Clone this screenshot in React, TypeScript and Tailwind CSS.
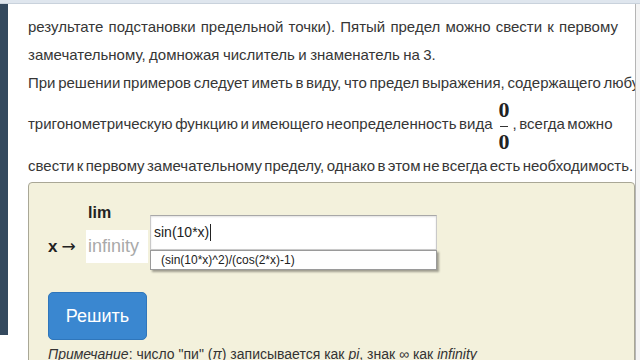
import React from "react";

const sans = { fontFamily: '"Liberation Sans", Arial, sans-serif' };

export default function App() {
  return (
    <div
      className="w-[640px] h-[360px] overflow-hidden bg-white flex flex-col text-[#363636]"
      style={sans}
    >
      <div className="h-[4px] bg-[#dfe6ee] border-b border-[#c9d2dc] shrink-0" />
      <div className="flex flex-1 min-h-0">
        <div className="w-[8px] h-[331px] bg-[#34495e] shrink-0" />
        <div className="w-[628px] shrink-0 overflow-hidden border-r border-[#b5b5b5]">
          <div className="pl-[20px] pt-[9px] text-[15px] leading-[27px] whitespace-nowrap">
            <div className="h-[28px] [word-spacing:1px]">результате подстановки предельной точки). Пятый предел можно свести к первому</div>
            <div className="h-[28px] [word-spacing:-0.7px]">замечательному, домножая числитель и знаменатель на 3.</div>
            <div className="[word-spacing:-1.5px]">При решении примеров следует иметь в виду, что предел выражения, содержащего любую</div>
            <div className="flex items-start h-[56px] [word-spacing:-1.6px]">
              <span className="mt-[14px]">тригонометрическую функцию и имеющего неопределенность вида</span>
              <span
                className="flex flex-col items-center mt-[3px] ml-[6px] mr-[3px] font-bold text-[22px] leading-[22px] text-[#222]"
                style={{ fontFamily: '"Liberation Serif", "Times New Roman", serif' }}
              >
                <span>0</span>
                <span className="mt-[5px] h-[1px] w-[8px] bg-[#333]" />
                <span className="mt-[4px]">0</span>
              </span>
              <span className="mt-[14px]">, всегда можно</span>
            </div>
            <div className="[word-spacing:-1.8px]">свести к первому замечательному пределу, однако в этом не всегда есть необходимость.</div>
          </div>

          <div className="ml-[20px] mt-[3px] border border-[#a9a796] rounded-[4px] bg-[#f3f1dc] pl-[19px] pt-[21px] h-[200px]">
            <div className="flex items-start">
              <div className="flex flex-col w-[102px]">
                <div className="pl-[40px] h-[18px] leading-[18px] text-[16px] font-bold text-[#222]">lim</div>
                <div className="flex items-center mt-[8px]">
                  <div className="w-[38px] flex items-center text-[#222] whitespace-nowrap">
                    <span className="font-bold text-[17px]">x</span>
                    <span
                      className="ml-[4px] text-[17px] leading-[17px]"
                      style={{ fontFamily: '"DejaVu Sans", sans-serif' }}
                    >
                      →
                    </span>
                  </div>
                  <div className="w-[62px] h-[33px] bg-white flex items-center pl-[2px] text-[18px] text-[#a9a9a9]">
                    infinity
                  </div>
                </div>
              </div>
              <div className="mt-[11px] w-[287px] flex flex-col">
                <div className="h-[35px] bg-white border border-[#c9c9c9] border-t-[#a8a8a8] shadow-[inset_0_1px_2px_rgba(0,0,0,0.12)] flex items-center pl-[3px] text-[14px] text-[#222]">
                  sin(10*x)
                  <span className="inline-block w-[1px] h-[17px] bg-[#222] ml-[1px]" />
                </div>
                <div className="h-[20px] bg-white border border-[#9a9a9a] shadow-[2px_2px_2px_rgba(0,0,0,0.35)] flex items-center pl-[10px] text-[12px] text-[#222]">
                  (sin(10*x)^2)/(cos(2*x)-1)
                </div>
              </div>
            </div>
            <button className="mt-[22px] w-[99px] h-[48px] rounded-[5px] bg-[#3a87d0] border border-[#2f76bb] text-white text-[18px] flex items-center justify-center">
              Решить
            </button>
            <div className="mt-[4px] text-[14px] leading-[20px] text-[#333] whitespace-nowrap">
              <i>Примечание</i>: число "пи" (<i>π</i>) записывается как <i>pi</i>, знак ∞ как <i>infinity</i>
            </div>
          </div>
        </div>
        <div className="flex-1 bg-[#f4f4f4]" />
      </div>
    </div>
  );
}
